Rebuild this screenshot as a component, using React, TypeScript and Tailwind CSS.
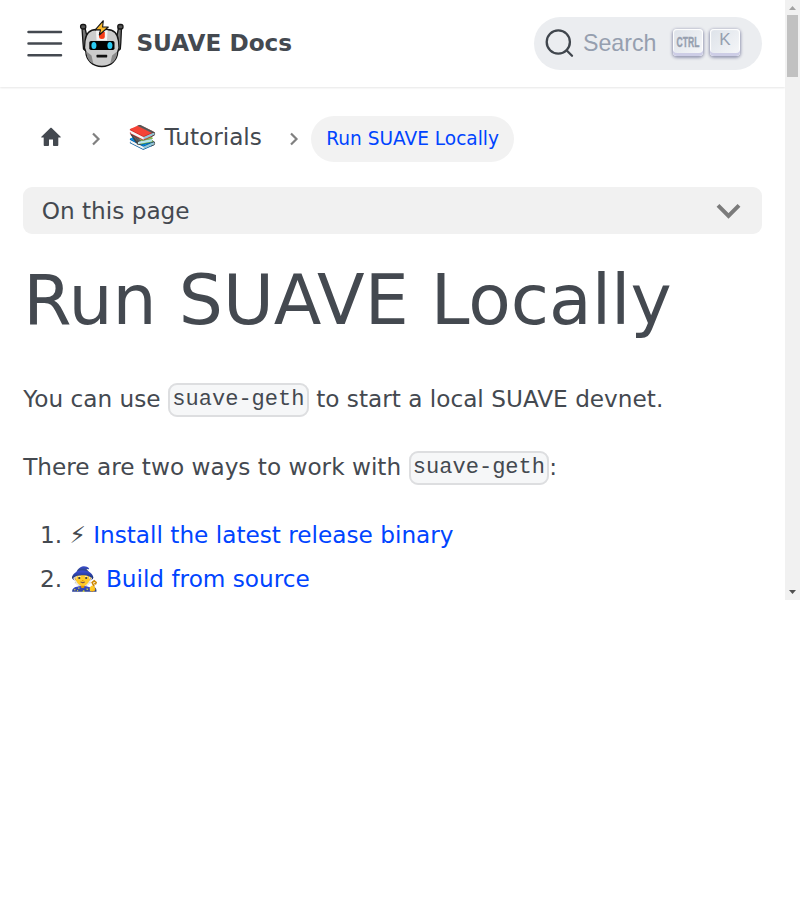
import React from "react";

function Robot() {
  return (
    <svg width="46" height="50" viewBox="0 0 46 50" className="block">
      <g stroke="#151515" strokeWidth="1.3" strokeLinejoin="round" strokeLinecap="round">
        <path d="M3 10h3L8.500 21 8 34l-3.500-3L4 25z" fill="#777" />
        <path d="M42.500 10h-3L37.300 21l.5 13 3.500-3 .5-6z" fill="#777" />
        <rect x="1.600" y="6.500" width="5.200" height="4.500" rx="2" fill="#555" />
        <rect x="38.800" y="6.500" width="5.200" height="4.500" rx="2" fill="#555" />
        <path d="M6 23C7 14.500 11.500 11.500 17.500 11.500h10.500c6 0 10.500 3 11.500 11.500l.5 7-1.200 3.500C38.500 42 32 48.500 22.800 48.500S7 42 6.800 33.500L5.500 30z" fill="#ccc" />
      </g>
      <path d="M7.500 33.500l5 4 1.800 8C10 43.500 7.600 39.500 7.500 33.500zM38.100 33.500l-5 4-1.800 8c4.300-2 6.700-6 6.800-12z" fill="#8b8b8b" />
      <path d="M17 12.200h11.600L28 22.500H17.600z" fill="#f4f4f4" />
      <path d="M20 14h5.800v4.500q0 2.500-2.900 2.500T20 18.500z" fill="#f43b16" />
      <rect x="10.300" y="23" width="25.200" height="9" rx="1.800" fill="#030303" />
      <ellipse cx="14.900" cy="27.500" rx="2.500" ry="3.500" fill="#2bcbf4" />
      <ellipse cx="30.900" cy="27.500" rx="2.500" ry="3.500" fill="#2bcbf4" />
      <rect x="17.500" y="36.800" width="10.700" height="2.600" rx=".6" fill="#111" />
      <path d="M24.300 2.700 16.200 11.900h5.300L20.300 17 29.300 9h-5.700z" fill="#f9b82c" stroke="#151515" strokeWidth="1.100" strokeLinejoin="round" />
    </svg>
  );
}

function Key({ children }: { children: React.ReactNode }) {
  return (
    <span className="flex h-[27px] w-[30px] items-center justify-center rounded-[4px] bg-[linear-gradient(-26.500deg,#f8f8f8,#d5dbe4)] bg-[linear-gradient(135deg,#dde2e9,#f6f7f9)] pb-[2px] text-[#969faf] shadow-[inset_0_-3px_0_0_#cdcde6,inset_0_0_1px_1px_#fff,0_1px_3px_1px_rgba(30,35,90,0.4)]">
      {children}
    </span>
  );
}

function Separator() {
  return (
    <svg width="9" height="14" viewBox="0 0 9 14" fill="none" stroke="#808080" strokeWidth="2.200" className="shrink-0">
      <path d="M1 1.500 6.500 7 1 12.500" />
    </svg>
  );
}

function Code({ children }: { children: React.ReactNode }) {
  return (
    <code className="rounded-[9px] border-2 border-[#dddee0] bg-[#f6f7f8] px-[2.320px] pt-[2.300px] pb-[2.300px] align-middle font-['Liberation_Mono',monospace] text-[22.040px] leading-[38px]">
      {children}
    </code>
  );
}

export default function App() {
  return (
    <div className="flex h-[600px] w-[800px] overflow-hidden bg-white font-['DejaVu_Sans',sans-serif] text-[23.200px] leading-[38px] text-[#444950]">
      <div className="h-[600px] w-[785px] shrink-0 overflow-hidden">
        <header className="flex h-[87px] items-center pr-[23px] pb-px pl-[27px] shadow-[0_1px_2px_0_rgba(0,0,0,0.1)]">
          <svg width="36" height="30" viewBox="0 0 36 30" stroke="#444950" strokeWidth="2.500" strokeLinecap="round">
            <path d="M1.500 4h32.500M1.500 15.600h32.500M1.500 27.300h32.500" />
          </svg>
          <div className="ml-[15.500px]"><Robot /></div>
          <b className="ml-[11.900px] font-bold whitespace-nowrap">SUAVE Docs</b>
          <button className="ml-auto flex h-[53px] w-[228px] items-center rounded-full bg-[#ebedf0] pl-[11px] font-['Liberation_Sans',sans-serif] text-[#969faf]">
            <svg width="30" height="30" viewBox="0 0 30 30" fill="none" stroke="#40464d" strokeWidth="2.300" strokeLinecap="round">
              <circle cx="13.300" cy="14" r="11.600" />
              <path d="m21.500 22.200 5.500 5.500" />
            </svg>
            <span className="ml-[8px] text-[23.2px]">Search</span>
            <span className="mt-[-2px] ml-[17px] flex gap-[6.500px]">
              <Key>
                <span className="flex w-[30px] scale-x-[0.570] justify-center text-[15px] leading-none font-bold [-webkit-text-stroke:0.4px_#969faf]">CTRL</span>
              </Key>
              <Key>
                <span className="-mt-[3px] text-[17px] leading-none">K</span>
              </Key>
            </span>
          </button>
        </header>
        <main className="pr-[23px] pl-[23px]">
          <nav className="mt-[29px] flex h-[46px] items-center">
            <svg width="24" height="24" viewBox="0 0 24 24" fill="#444950" className="mt-[-4px] ml-[16px] shrink-0">
              <path d="M10 20v-5.500h4V20c0 .55.45 1 1 1h3.300c.55 0 1-.45 1-1v-7.500h2c.46 0 .68-.57.33-.87L12.670 2.900c-.38-.34-.96-.34-1.340 0L2.370 11.630c-.34.3-.13.87.33.87h2V20c0 .55.45 1 1 1H9c.55 0 1-.45 1-1z" />
            </svg>
            <span className="ml-[29px] flex"><Separator /></span>
            <span className="mt-[-4px] ml-[27.200px] whitespace-nowrap">📚 Tutorials</span>
            <span className="ml-[27.800px] flex"><Separator /></span>
            <span className="ml-[12px] flex h-[46px] w-[203px] shrink-0 items-center justify-center rounded-full bg-[#f2f2f2] text-[18.560px] whitespace-nowrap text-[#0044ff]">
              <span className="mt-[-1px] ml-[0.800px]">Run SUAVE Locally</span>
            </span>
          </nav>
          <button className="mt-[25px] flex h-[47px] w-full items-center justify-between rounded-[9px] bg-[#f1f1f1] pr-[21px] pl-[18.700px]">
            <span>On this page</span>
            <svg width="25" height="16" viewBox="0 0 25 16" fill="none" stroke="#7b7b7b" strokeWidth="4">
              <path d="m2 2.300 10.500 10.500L23 2.300" />
            </svg>
          </button>
          <h1 className="mt-[22px] h-[87px] pl-[0.200px] text-[69.600px] leading-[87px] whitespace-nowrap">Run SUAVE Locally</h1>
          <p className="mt-[37px] h-[38px] pl-[0.200px]">You can use <Code>suave-geth</Code> to start a local SUAVE devnet.</p>
          <p className="mt-[30px] h-[38px] pl-[0.200px]">There are two ways to work with <Code>suave-geth</Code>:</p>
          <ol className="mt-[30px] list-decimal pl-[46.500px] leading-[38px]">
            <li className="h-[38px]">⚡ <a className="text-[#0044ff]">Install the latest release binary</a></li>
            <li className="mt-[6px] h-[38px]">🧙 <a className="text-[#0044ff]">Build from source</a></li>
          </ol>
        </main>
      </div>
      <div className="flex h-[600px] w-[15px] flex-col items-center bg-[#f1f1f1]">
        <svg width="15" height="15" viewBox="0 0 15 15" fill="#a3a3a3"><path d="M4 10h7L7.500 6z" /></svg>
        <div className="h-[62px] w-[11px] bg-[#c1c1c1]" />
        <svg width="15" height="15" viewBox="0 0 15 15" fill="#505050" className="mt-auto"><path d="M4 5h7L7.500 9z" /></svg>
      </div>
    </div>
  );
}
